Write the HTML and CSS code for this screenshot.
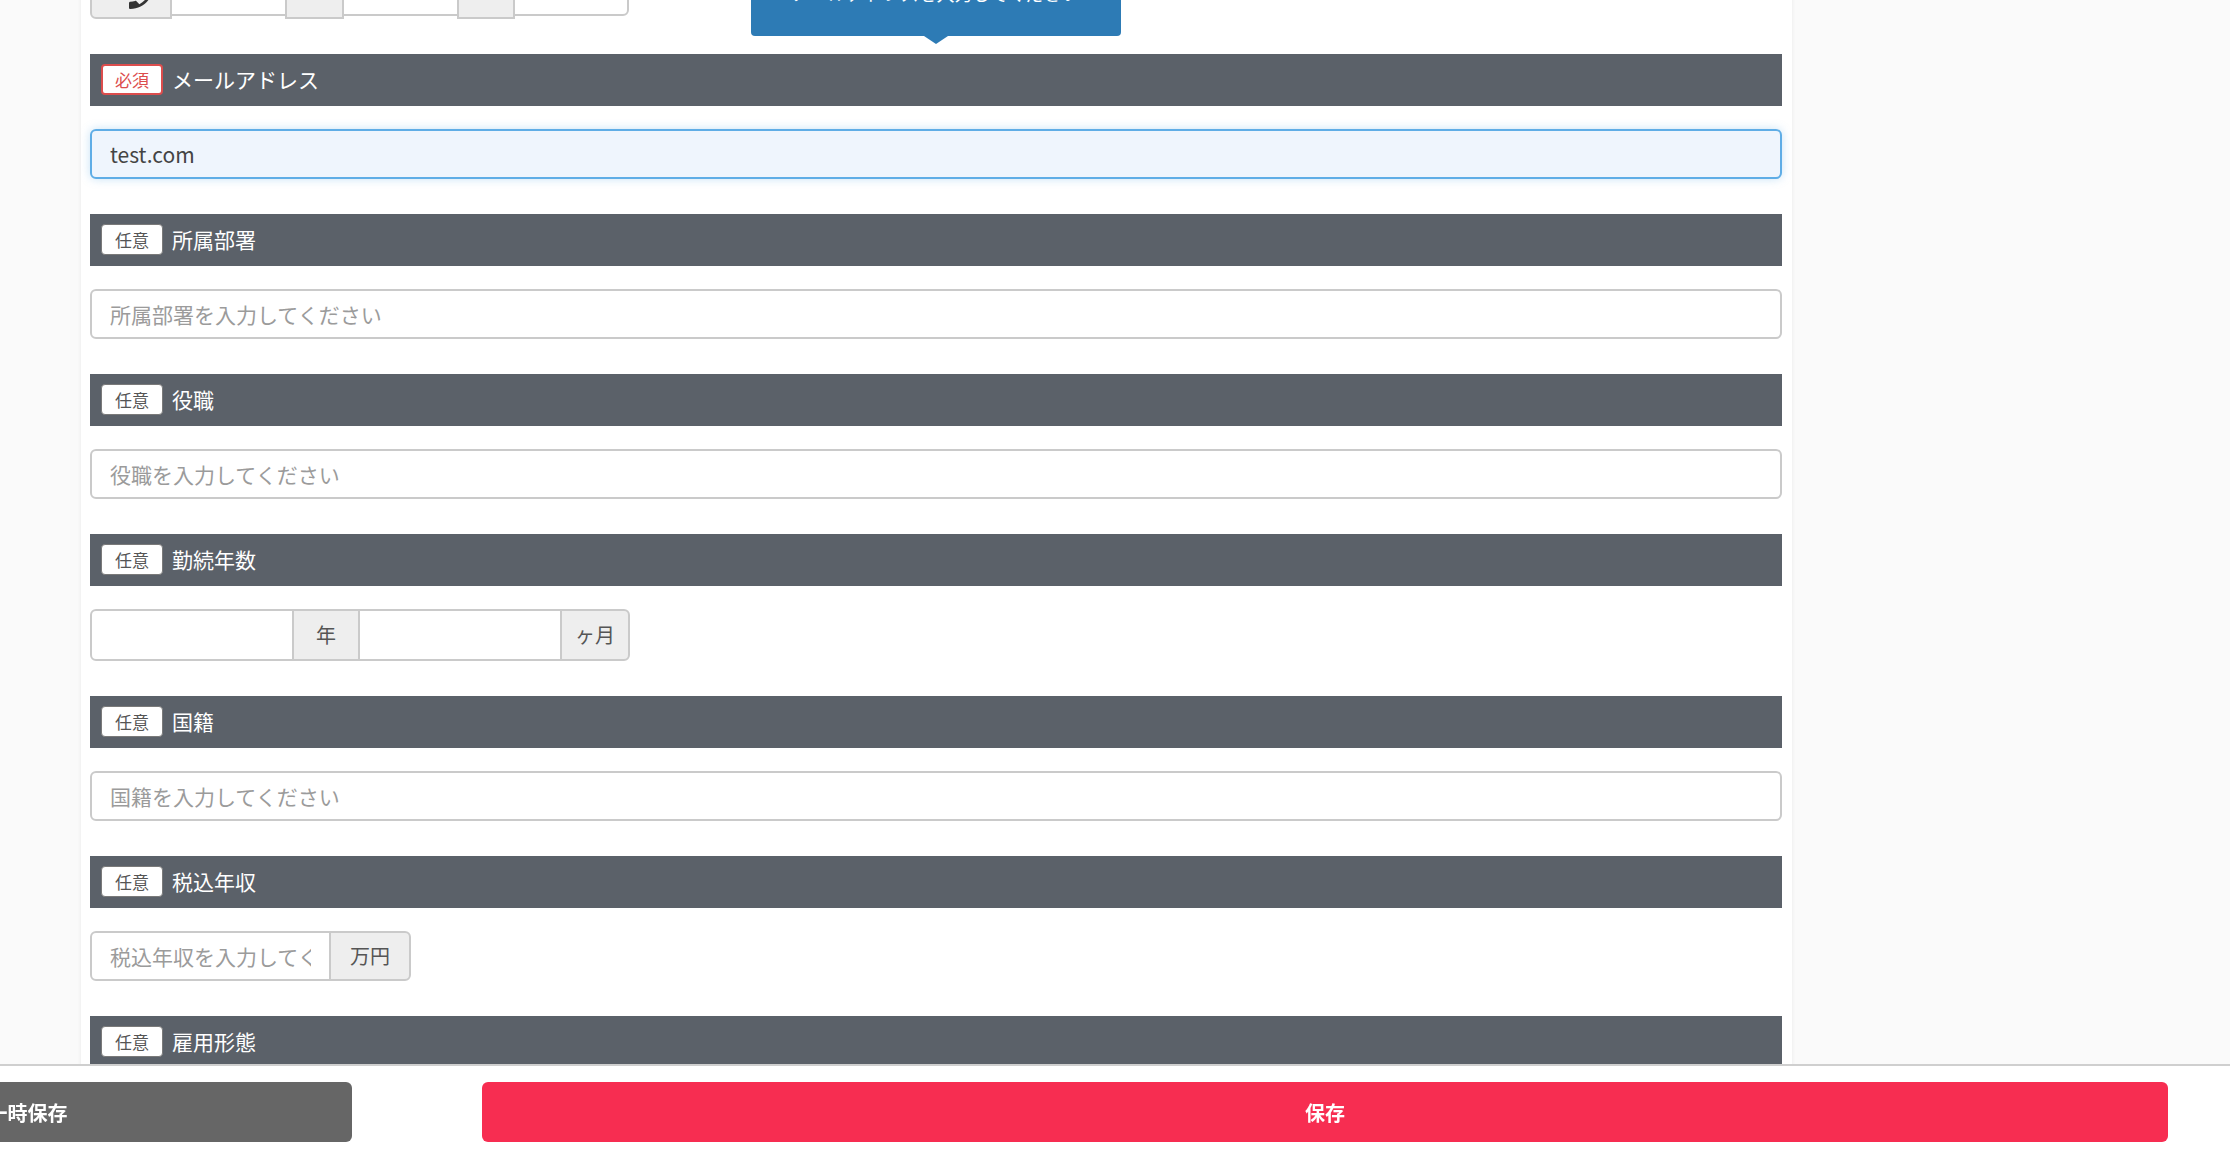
FILE: index.html
```html
<!DOCTYPE html>
<html lang="ja">
<head>
<meta charset="utf-8">
<title>応募者情報の編集</title>
<link rel="stylesheet" href="styles.css">
</head>
<body>
<main class="sheet">

  <!-- 電話番号 (continued from the section above) -->
  <div class="field-body field-body--lead">
    <div class="input-group input-group--tel">
      <span class="addon addon--icon">
        <svg class="tel-icon" viewBox="0 0 24 24" aria-hidden="true">
          <path transform="translate(24 0) scale(-1 1)" d="M6.62 10.79c1.44 2.83 3.760 5.14 6.59 6.59l2.2-2.2c.27-.27.67-.36 1.02-.24 1.12.37 2.33.57 3.57.57.55 0 1 .45 1 1V20c0 .55-.45 1-1 1-9.39 0-17-7.61-17-17 0-.55.45-1 1-1h3.5c.55 0 1 .45 1 1 0 1.25.2 2.45.57 3.57.11.35.03.74-.25 1.02l-2.2 2.2z"/>
        </svg>
      </span>
      <input class="control tel-part tel-part--a" type="tel">
      <span class="addon addon--dash-a"></span>
      <input class="control tel-part tel-part--b" type="tel">
      <span class="addon addon--dash-b"></span>
      <input class="control tel-part tel-part--c" type="tel">
    </div>
  </div>

  <section class="field">
    <h3 class="field-head">
      <span class="tooltip">メールアドレスを入力してください</span>
      <span class="badge badge--required">必須</span>
      <span class="field-label">メールアドレス</span>
    </h3>
    <div class="field-body">
      <input class="control control--focus" type="email" value="test.com">
    </div>
  </section>

  <section class="field">
    <h3 class="field-head">
      <span class="badge">任意</span>
      <span class="field-label">所属部署</span>
    </h3>
    <div class="field-body">
      <input class="control" type="text" placeholder="所属部署を入力してください">
    </div>
  </section>

  <section class="field">
    <h3 class="field-head">
      <span class="badge">任意</span>
      <span class="field-label">役職</span>
    </h3>
    <div class="field-body">
      <input class="control" type="text" placeholder="役職を入力してください">
    </div>
  </section>

  <section class="field">
    <h3 class="field-head">
      <span class="badge">任意</span>
      <span class="field-label">勤続年数</span>
    </h3>
    <div class="field-body">
      <div class="input-group input-group--tenure">
        <input class="control tenure-input" type="number">
        <span class="addon addon--year">年</span>
        <input class="control tenure-input" type="number">
        <span class="addon addon--month">ヶ月</span>
      </div>
    </div>
  </section>

  <section class="field">
    <h3 class="field-head">
      <span class="badge">任意</span>
      <span class="field-label">国籍</span>
    </h3>
    <div class="field-body">
      <input class="control" type="text" placeholder="国籍を入力してください">
    </div>
  </section>

  <section class="field">
    <h3 class="field-head">
      <span class="badge">任意</span>
      <span class="field-label">税込年収</span>
    </h3>
    <div class="field-body">
      <div class="input-group">
        <input class="control income-input" type="text" placeholder="税込年収を入力してください">
        <span class="addon addon--yen">万円</span>
      </div>
    </div>
  </section>

  <section class="field">
    <h3 class="field-head">
      <span class="badge">任意</span>
      <span class="field-label">雇用形態</span>
    </h3>
    <div class="field-body">
      <select class="control">
        <option>選択してください</option>
        <option>正社員</option>
        <option>契約社員</option>
        <option>派遣社員</option>
        <option>アルバイト・パート</option>
      </select>
    </div>
  </section>

</main>

<footer class="action-bar">
  <button class="btn btn--draft" type="button">一時保存</button>
  <button class="btn btn--save" type="submit">保存</button>
</footer>
</body>
</html>
```

FILE: styles.css
```css
* {
  box-sizing: border-box;
}

html,
body {
  margin: 0;
  padding: 0;
}

body {
  height: 1150px;
  overflow: hidden;
  background: #fafafa;
  font-family: "Noto Sans CJK JP", "Noto Sans", sans-serif;
  color: #333;
}

/* white form sheet, scrolled so the phone row sits just above the fold */
.sheet {
  width: 1711px;
  margin: -34px 0 0 81px;
  padding: 0 10px 240px 9px;
  background: #fff;
  box-shadow: 0 0 4px rgba(0, 0, 0, 0.07);
}

/* section header bar */
.field-head {
  position: relative;
  display: flex;
  align-items: center;
  height: 52px;
  margin: 0;
  padding: 0 0 2px 11px;
  background: #5b6169;
  color: #fff;
  font-size: 21px;
  font-weight: 400;
}

.field-label {
  line-height: 1;
}

.badge {
  display: flex;
  align-items: center;
  justify-content: center;
  width: 62px;
  height: 31px;
  margin-right: 9px;
  border: 1px solid #7a7a7a;
  border-radius: 4px;
  background: #fff;
  color: #555;
  font-size: 17px;
  line-height: 1;
}

.badge--required {
  border: 2px solid #dc4d4d;
  color: #dc4d4d;
}

.field-body {
  padding: 23px 0 35px;
}

.field-body--lead {
  padding-top: 0;
}

/* text inputs */
.control {
  display: block;
  width: 100%;
  height: 50px;
  margin: 0;
  padding: 0 18px;
  border: 2px solid #cacaca;
  border-radius: 6px;
  background: #fff;
  font-family: inherit;
  font-size: 21px;
  color: #444;
  outline: none;
  -webkit-appearance: none;
  appearance: none;
}

.control::placeholder {
  color: #9b9b9b;
}

.control--focus {
  border-color: #5fade6;
  background: #eff5fd;
  box-shadow: 0 0 10px rgba(95, 173, 230, 0.35);
}

/* input + addon groups */
.input-group {
  display: flex;
  align-items: flex-start;
}

.input-group > * + * {
  margin-left: -2px;
}

.input-group .control {
  flex: none;
  border-radius: 0;
}

.input-group > :first-child {
  border-radius: 6px 0 0 6px;
}

.input-group > :last-child {
  border-radius: 0 6px 6px 0;
}

.addon {
  flex: none;
  display: flex;
  align-items: center;
  justify-content: center;
  height: 50px;
  border: 2px solid #cacaca;
  background: #eee;
  color: #555;
  font-size: 20px;
  line-height: 1;
}

/* phone number row */
.input-group--tel .addon {
  height: 53px;
}

.addon--icon {
  width: 82px;
  overflow: hidden;
}

.tel-icon {
  width: 32px;
  height: 32px;
  margin-top: 8px;
  fill: #333;
  transform: translateX(10px);
}

.tel-part--a,
.tel-part--b {
  width: 117px;
}

.tel-part--c {
  width: 116px;
}

.addon--dash-a {
  width: 59px;
}

.addon--dash-b {
  width: 58px;
}

/* years of service row */
.input-group--tenure .control,
.input-group--tenure .addon {
  height: 52px;
}

.tenure-input {
  width: 204px;
}

.addon--year {
  width: 68px;
}

.addon--month {
  width: 70px;
}

/* annual income row */
.income-input {
  width: 241px;
}

.addon--yen {
  width: 82px;
}

/* validation balloon over the e-mail field */
.tooltip {
  position: absolute;
  left: 50%;
  bottom: calc(100% + 18px);
  width: 370px;
  margin-left: -185px;
  padding: 18px 10px 29px;
  border-radius: 4px;
  background: #2d7bb5;
  color: #fff;
  font-size: 18px;
  line-height: 27px;
  text-align: center;
  white-space: nowrap;
}

.tooltip::after {
  content: "";
  position: absolute;
  left: 50%;
  bottom: -8px;
  margin-left: -12px;
  border-top: 8px solid #2d7bb5;
  border-left: 12px solid transparent;
  border-right: 12px solid transparent;
}

/* sticky action bar */
.action-bar {
  position: fixed;
  left: 0;
  right: 0;
  bottom: 0;
  display: flex;
  gap: 130px;
  height: 86px;
  padding-top: 16px;
  border-top: 2px solid #cfcfcf;
  background: #fff;
}

.btn {
  flex: none;
  height: 60px;
  padding: 0;
  border: 0;
  border-radius: 6px;
  color: #fff;
  font-family: "Noto Sans CJK JP", "Noto Sans", sans-serif;
  font-size: 20px;
  font-weight: 700;
}

.btn--draft {
  width: 649px;
  margin-left: -297px;
  background: #666;
}

.btn--save {
  width: 1686px;
  background: #f72d51;
}
```
